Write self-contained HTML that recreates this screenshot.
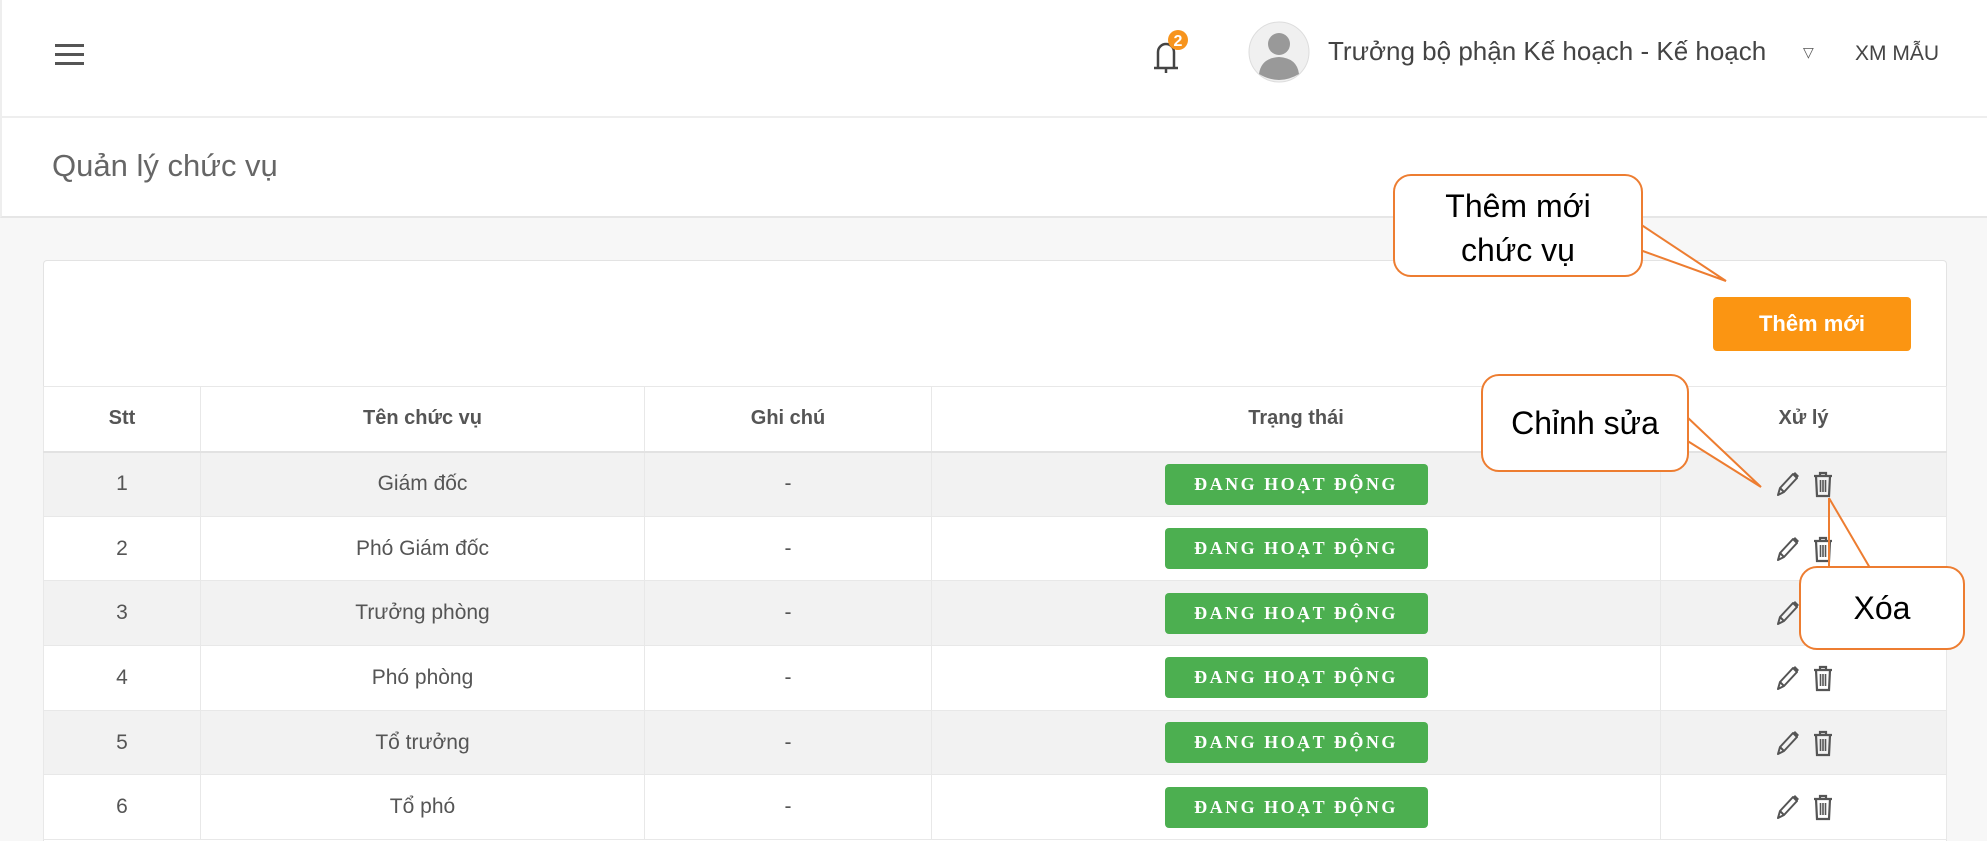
<!DOCTYPE html>
<html><head><meta charset="utf-8"><style>
*{box-sizing:border-box;margin:0;padding:0}
html,body{width:1987px;height:841px;overflow:hidden}
body{background:#f7f7f7;font-family:"Liberation Sans",sans-serif;position:relative;color:#555}
.hdr{position:absolute;left:0;top:0;width:1987px;height:118px;background:#fff;border-bottom:2px solid #eee;border-left:2px solid #eee}
.title{position:absolute;left:0;top:118px;width:1987px;height:100px;background:#fff;border-bottom:2px solid #e6e6e6;border-left:2px solid #eee}
.title span{position:absolute;left:50px;top:30px;font-size:31px;color:#666}
.card{position:absolute;left:43px;top:260px;width:1904px;height:581px;background:#fff;border:1px solid #e3e3e3;border-bottom:none;border-radius:4px 4px 0 0}
.btn{position:absolute;left:1713px;top:297px;width:198px;height:54px;background:#fb9512;border-radius:4px;color:#fff;font-weight:bold;font-size:22px;text-align:center;line-height:54px}
table{position:absolute;left:43px;top:386px;border-collapse:collapse;width:1904px}
td,th{border:1px solid #e8e8e8;text-align:center;font-size:21px;color:#555;height:64.7px;padding:0}
th{font-weight:bold;font-size:20px;height:65px;border-bottom:2px solid #e2e2e2}
tr.g td{background:#f2f2f2}
.b{display:inline-block;width:263px;height:41px;background:#4caf50;border-radius:4px;color:#fff;font-family:"Liberation Serif",serif;font-weight:bold;font-size:18px;letter-spacing:2.5px;line-height:41px}
.ic{display:inline-block;vertical-align:middle;margin:0 6px}
.co{position:absolute;background:#fff;border:2px solid #ed7d31;border-radius:18px;color:#000;font-size:32px;text-align:center;font-family:"Liberation Sans Narrow","Liberation Sans",sans-serif}
</style></head><body>
<div class="hdr">
<svg style="position:absolute;left:53px;top:43px" width="30" height="24"><rect y="1" width="29" height="3" fill="#555"/><rect y="10" width="29" height="3" fill="#555"/><rect y="19" width="29" height="3" fill="#555"/></svg>
<svg style="position:absolute;left:1142px;top:26px" width="50" height="50"><path d="M14 42 V26 a8 8 0 0 1 16 0 V42 Z M10 42 H34 M22 42 v5" stroke="#444" stroke-width="2.5" fill="none"/><circle cx="34" cy="14" r="10" fill="#f7941d"/><text x="34" y="20" font-size="16" font-weight="bold" fill="#fff" text-anchor="middle" font-family="Liberation Sans">2</text></svg>
<svg style="position:absolute;left:1245px;top:20px" width="64" height="64"><circle cx="32" cy="32" r="30" fill="#f0f0f0" stroke="#ddd"/><circle cx="32" cy="24" r="11" fill="#999"/><path d="M12 54 Q14 38 32 37 Q50 38 52 54 Q32 66 12 54Z" fill="#999"/></svg>
<div style="position:absolute;left:1326px;top:36px;font-size:26px;color:#444">Trưởng bộ phận Kế hoạch - Kế hoạch</div>
<div style="position:absolute;left:1801px;top:44px;font-size:14px;color:#555">▽</div>
<div style="position:absolute;left:1853px;top:42px;font-size:21px;color:#444">XM MẪU</div>
</div>
<div class="title"><span>Quản lý chức vụ</span></div>
<div class="card"></div>
<div class="btn">Thêm mới</div>
<table>
<tr><th style="width:157px">Stt</th><th style="width:444px">Tên chức vụ</th><th style="width:287px">Ghi chú</th><th style="width:729px">Trạng thái</th><th>Xử lý</th></tr>
<tr class="g"><td>1</td><td>Giám đốc</td><td>-</td><td><span class="b">ĐANG HOẠT ĐỘNG</span></td><td>ICON</td></tr>
<tr><td>2</td><td>Phó Giám đốc</td><td>-</td><td><span class="b">ĐANG HOẠT ĐỘNG</span></td><td>ICON</td></tr>
<tr class="g"><td>3</td><td>Trưởng phòng</td><td>-</td><td><span class="b">ĐANG HOẠT ĐỘNG</span></td><td>ICON</td></tr>
<tr><td>4</td><td>Phó phòng</td><td>-</td><td><span class="b">ĐANG HOẠT ĐỘNG</span></td><td>ICON</td></tr>
<tr class="g"><td>5</td><td>Tổ trưởng</td><td>-</td><td><span class="b">ĐANG HOẠT ĐỘNG</span></td><td>ICON</td></tr>
<tr><td>6</td><td>Tổ phó</td><td>-</td><td><span class="b">ĐANG HOẠT ĐỘNG</span></td><td>ICON</td></tr>
</table>
<script>
var ic='<svg class="ic" width="26" height="28" viewBox="0 0 26 28"><path d="M4 25 L6 18 L19 4 L23 8 L10 22 Z M6 18 L10 22" stroke="#555" stroke-width="2" fill="none" stroke-linejoin="round"/><path d="M19 4 L23 8 L25 6 L21 2Z" fill="#555"/></svg><svg class="ic" width="22" height="28" viewBox="0 0 22 28"><path d="M2 6 H20 M8 6 V3 H14 V6 M4 6 L5 26 H17 L18 6" stroke="#555" stroke-width="2.2" fill="none"/><path d="M8.5 10 V22 M11 10 V22 M13.5 10 V22" stroke="#555" stroke-width="1.6"/></svg>';
document.querySelectorAll('td').forEach(function(t){if(t.textContent=='ICON')t.innerHTML=ic;});
</script>
<svg style="position:absolute;left:0;top:0" width="1987" height="841">
<path d="M1640 250 L1726 281 L1640 224" fill="#fff" stroke="#ed7d31" stroke-width="2"/>
<path d="M1686 440 L1761 487 L1686 416" fill="#fff" stroke="#ed7d31" stroke-width="2"/>
<path d="M1829 498 L1829 568 M1829 498 L1870 568" stroke="#ed7d31" stroke-width="2" fill="none"/>
</svg>
<div class="co" style="left:1393px;top:174px;width:250px;height:103px;padding-top:8px;line-height:44px">Thêm mới<br>chức vụ</div>
<div class="co" style="left:1481px;top:374px;width:208px;height:98px;line-height:94px">Chỉnh sửa</div>
<div class="co" style="left:1799px;top:566px;width:166px;height:84px;line-height:80px">Xóa</div>
</body></html>
